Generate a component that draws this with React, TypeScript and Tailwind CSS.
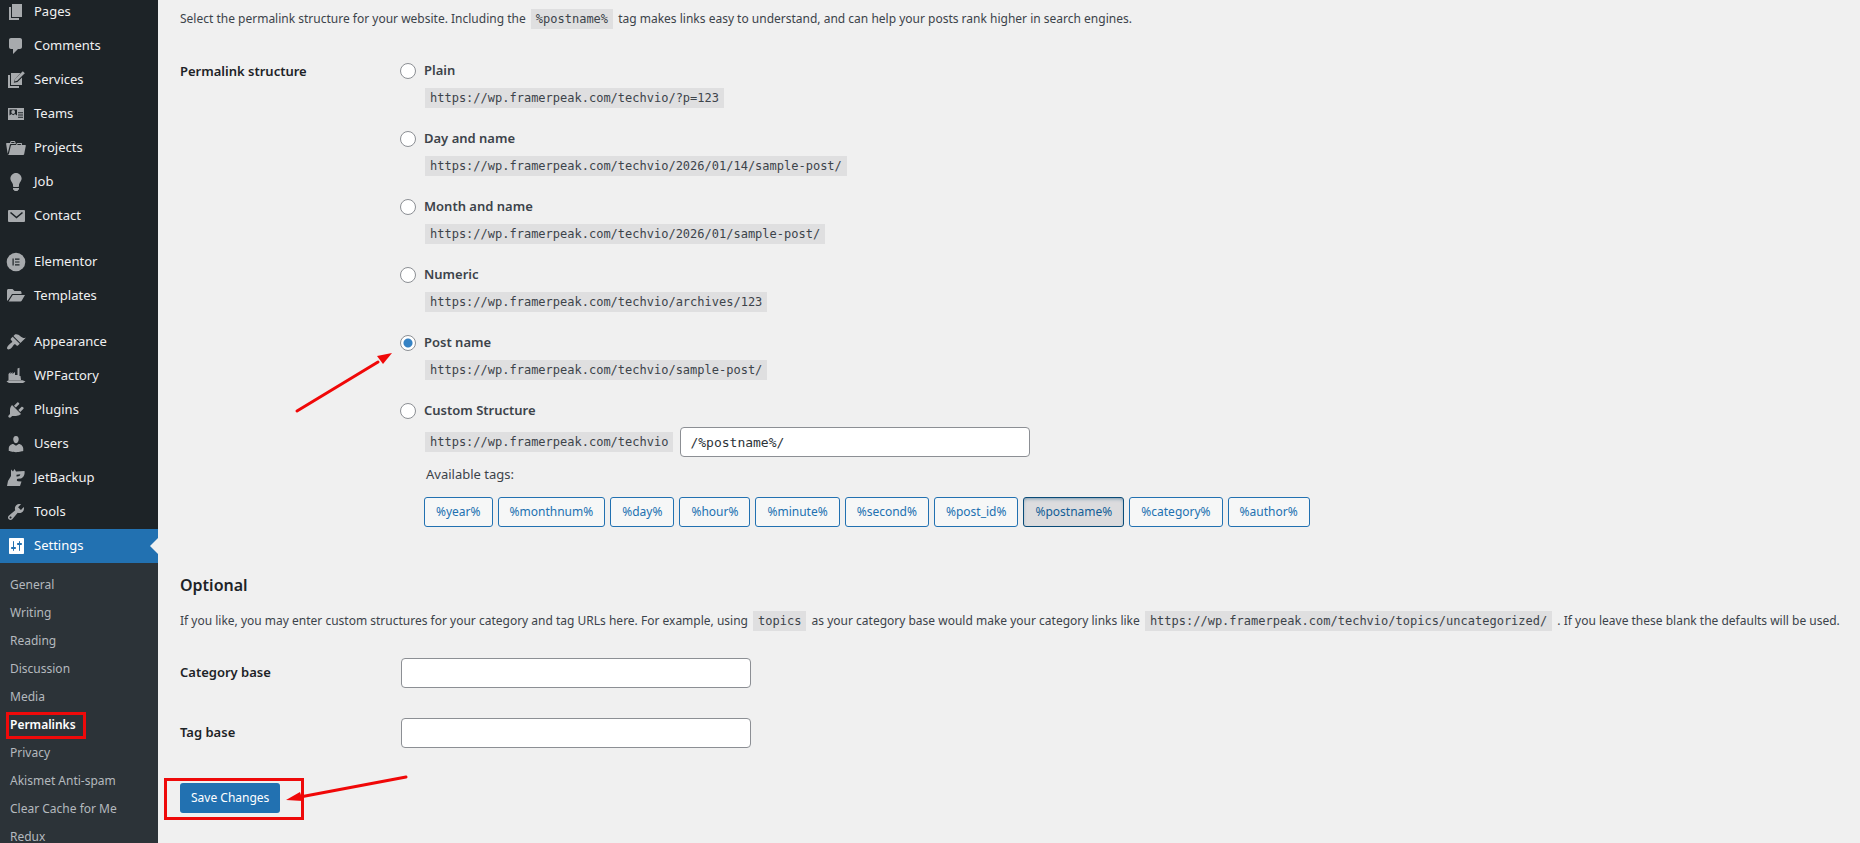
import { clsx } from "clsx";
import type { ReactNode } from "react";

const icons: Record<string, ReactNode> = {
  pages: <path d="M6 15V2h10v13H6zm-1 1h8v2H3V5h2v11z" />,
  comments: (
    <path d="M5 2h9c1.1 0 2 .9 2 2v7c0 1.1-.9 2-2 2h-2l-5 5v-5H5c-1.1 0-2-.9-2-2V4c0-1.1.9-2 2-2z" />
  ),
  services: (
    <>
      <path d="M2 5h2v11h9v2H2z" />
      <path d="M5 3h9.500L9 9l-1.200 3.800L11.500 12 16 7.500V15H5z" />
      <path d="M16.800 1.200l2 2-7.600 7.600-2.600.6.600-2.600z" />
    </>
  ),
  teams: (
    <path
      fillRule="evenodd"
      d="M2 4h16v12H2zM3.500 5.500v8H11v-8zM12 8.200v1h5v-1zM12 10.500v1h5v-1zM12 12.800v1h5v-1zM5.300 8a1.900 2 0 1 1 3.800 0a1.900 2 0 1 1-3.800 0zM3.500 13.500v-2l2-1.500 1.700 1.200L9 10l2 1.500v2z"
    />
  ),
  projects: (
    <path d="M4 5H.78c-.37 0-.74.32-.69.84l1.56 9.99S3.5 8.47 3.86 6.7c.11-.53.61-.7.98-.7H10s-.7-2.08-.77-2.31C9.11 3.25 8.89 3 8.45 3H5.14c-.36 0-.7.23-.8.64C4.25 4.04 4 5 4 5zm4.88 0h-4s.42-1 .87-1h2.13c.48 0 1 1 1 1zM2.67 16.25c-.31.47-.76.75-1.26.75h15.73c.54 0 .92-.31 1.03-.83.44-2.19 1.68-8.44 1.68-8.44.07-.5-.3-.73-.62-.73H16V5.53c0-.16-.26-.53-.66-.53h-3.76c-.52 0-.87.58-.87.58L10 7H5.59c-.32 0-.63.19-.69.5 0 0-1.59 6.7-1.72 7.33-.07.37-.22.99-.51 1.42zM15.38 7H11s.58-1 1.13-1h2.29c.71 0 .96 1 .96 1z" />
  ),
  job: (
    <path d="M10 1c3.11 0 5.63 2.52 5.63 5.62 0 1.84-2.03 4.58-2.03 4.58-.33.44-.6 1.25-.6 1.8v1c0 .55-.45 1-1 1H8c-.55 0-1-.45-1-1v-1c0-.55-.27-1.36-.6-1.8 0 0-2.02-2.74-2.02-4.58C4.38 3.52 6.89 1 10 1zM7 16.87V16h6v.87c0 .62-.13 1.13-.75 1.13H12c0 .62-.4 1-1.02 1h-2c-.61 0-.98-.38-.98-1h-.25c-.62 0-.75-.51-.75-1.13z" />
  ),
  contact: (
    <>
      <rect x="2" y="4" width="17" height="12" rx="1" />
      <path d="M4.500 6.500l6 5 6-5" fill="none" stroke="#1d2327" strokeWidth="1.600" />
    </>
  ),
  elementor: (
    <>
      <circle cx="10" cy="10" r="9.300" />
      <path d="M6.500 6.500h1.200v7H6.500zM9 6.500h4.500v1.200H9zM9 9.400h4.500v1.200H9zM9 12.300h4.500v1.200H9z" fill="#1d2327" />
    </>
  ),
  templates: (
    <path d="M1 4.500C1 3.700 1.600 3 2.500 3h4l2 2h5.500c.8 0 1.500.7 1.500 1.500V8H6L2.500 13.500 1 15zM6.700 9H19l-3.300 5.800c-.3.500-.7.700-1.200.7H2.600z" />
  ),
  appearance: (
    <path d="M14.48 11.06L7.41 3.99l1.5-1.5c.5-.56 2.3-.47 3.51.32 1.21.8 1.43 1.28 2.91 2.1 1.18.64 2.45 1.26 4.45.85zm-.71.71L6.7 4.7 4.93 6.47c-.39.39-.39 1.02 0 1.41l1.06 1.06c.39.39.39 1.03 0 1.42-.6.6-1.43 1.11-2.21 1.69-.35.26-.7.53-1.01.84C1.43 14.23.4 16.08 1.4 17.07c.99 1 2.84-.03 4.18-1.36.31-.31.58-.66.85-1.02.57-.78 1.08-1.61 1.69-2.21.39-.39 1.02-.39 1.41 0l1.06 1.06c.39.39 1.02.39 1.41 0z" />
  ),
  factory: (
    <>
      <path d="M2.500 14V8l2-2v2l2-2v2l2.500-2v3h2.500V2.500l2-.8V10h1l.5 4z" />
      <path d="M.5 15.500L2.500 14.300h14l3 1.200L17 17H3z" />
    </>
  ),
  plugins: (
    <path d="M13.11 4.36L9.87 7.6 8 5.73l3.24-3.24c.35-.34 1.05-.2 1.56.32.52.51.66 1.21.31 1.55zm-8 1.77l.91-1.12 9.01 9.01-1.19.84c-.71.71-2.63 1.16-3.82 1.16H6.14L4.9 17.26c-.59.59-1.54.59-2.12 0-.59-.58-.59-1.53 0-2.12L4 13.9V10c0-1.19.42-3.15 1.11-3.87zm7.26 3.97l3.24-3.24c.34-.35 1.04-.21 1.55.31.52.51.66 1.21.31 1.55l-3.24 3.25z" />
  ),
  users: (
    <path d="M10 9.25c-2.27 0-2.73-3.44-2.73-3.44C7 4.02 7.82 2 9.97 2c2.16 0 2.98 2.02 2.71 3.81 0 0-.41 3.44-2.68 3.44zm0 2.57L12.72 10c2.39 0 4.52 2.33 4.52 4.53v2.49s-3.65 1.13-7.24 1.13c-3.65 0-7.24-1.13-7.24-1.13v-2.49c0-2.25 1.94-4.48 4.47-4.48z" />
  ),
  jetbackup: (
    <path
      fillRule="evenodd"
      d="M5 1.500l2 2L8.500 1l1.500 2.500 8.500-.5c.6 3-.7 6.500-3.500 7.500l-3 .2c-1.500 0-1.600 2.300-.2 2.500l3.700.3L14 18H1l1-5 3-5zM10.500 6.800l3.800-.6c-.2 1.700-1.600 2.400-3.800 2.200z"
    />
  ),
  tools: (
    <path d="M16.68 9.77c-1.34 1.34-3.3 1.67-4.95.99l-5.41 6.52c-.99.99-2.59.99-3.58 0s-.99-2.59 0-3.57l6.52-5.42c-.68-1.65-.35-3.61.99-4.95 1.28-1.28 3.12-1.62 4.72-1.06l-2.89 2.89 2.82 2.82 2.86-2.87c.53 1.58.18 3.39-1.08 4.65zM3.81 16.21c.4.39 1.04.39 1.43 0 .4-.4.4-1.04 0-1.43-.39-.4-1.03-.4-1.43 0-.39.39-.39 1.03 0 1.43z" />
  ),
  settings: (
    <path d="M18 17V3c0-.6-.4-1-1-1H4c-.6 0-1 .4-1 1v14c0 .6.4 1 1 1h13c.6 0 1-.4 1-1zM8 11h1c.55 0 1 .45 1 1s-.45 1-1 1H8v1.500c0 .28-.22.5-.5.5s-.5-.22-.5-.5V13H6c-.55 0-1-.45-1-1s.45-1 1-1h1V5.500c0-.28.22-.5.5-.5s.5.22.5.5V11zm5-2h-1c-.55 0-1-.45-1-1s.45-1 1-1h1V5.500c0-.28.22-.5.5-.5s.5.22.5.5V7h1c.55 0 1 .45 1 1s-.45 1-1 1h-1v5.500c0 .28-.22.5-.5.5s-.5-.22-.5-.5V9z" />
  ),
};

const menuGroups = [
  [
    { icon: "pages", label: "Pages" },
    { icon: "comments", label: "Comments" },
    { icon: "services", label: "Services" },
    { icon: "teams", label: "Teams" },
    { icon: "projects", label: "Projects" },
    { icon: "job", label: "Job" },
    { icon: "contact", label: "Contact" },
  ],
  [
    { icon: "elementor", label: "Elementor" },
    { icon: "templates", label: "Templates" },
  ],
  [
    { icon: "appearance", label: "Appearance" },
    { icon: "factory", label: "WPFactory" },
    { icon: "plugins", label: "Plugins" },
    { icon: "users", label: "Users" },
    { icon: "jetbackup", label: "JetBackup" },
    { icon: "tools", label: "Tools" },
    { icon: "settings", label: "Settings" },
  ],
];

const submenu = [
  "General",
  "Writing",
  "Reading",
  "Discussion",
  "Media",
  "Permalinks",
  "Privacy",
  "Akismet Anti-spam",
  "Clear Cache for Me",
  "Redux",
];

const site = "https://wp.framerpeak.com/techvio";

const structures = [
  { id: "plain", label: "Plain", path: "/?p=123" },
  { id: "day", label: "Day and name", path: "/2026/01/14/sample-post/" },
  { id: "month", label: "Month and name", path: "/2026/01/sample-post/" },
  { id: "numeric", label: "Numeric", path: "/archives/123" },
  { id: "postname", label: "Post name", path: "/sample-post/" },
];

const tags = [
  "year",
  "monthnum",
  "day",
  "hour",
  "minute",
  "second",
  "post_id",
  "postname",
  "category",
  "author",
];

const Code = ({ inline, children }: { inline?: boolean; children: ReactNode }) => (
  <code
    className={clsx(
      "inline-block h-5 px-[5px] text-xs leading-5 bg-[#dfdfe0] font-['DejaVu_Sans_Mono',monospace]",
      inline && "mx-0.5"
    )}
  >
    {children}
  </code>
);

const Radio = ({ id, checked }: { id: string; checked?: boolean }) => (
  <input
    type="radio"
    id={id}
    name="structure"
    defaultChecked={checked}
    className="appearance-none size-4 shrink-0 rounded-full border border-[#8c8f94] bg-white checked:bg-[radial-gradient(circle,#3582c4_0_4px,transparent_5px)]"
  />
);

const inputClass =
  "block h-[30px] w-[350px] rounded border border-[#8c8f94] bg-white px-[9px] text-[13px] text-[#2c3338] font-['DejaVu_Sans_Mono',monospace]";

const Sidebar = () => (
  <nav className="w-[158px] shrink-0 overflow-hidden bg-[#1d2327]">
    <div className="-mt-[5px] flex flex-col gap-3">
      {menuGroups.map((group, i) => (
        <ul key={i}>
          {group.map(({ icon, label }) => {
            const active = icon === "settings";
            return (
              <li key={icon}>
                <a
                  href="#"
                  className={clsx(
                    "relative flex h-[34px] items-center gap-2 pl-1.5 text-[13px]",
                    active ? "bg-[#2271b1] text-white" : "text-[#f0f0f1]"
                  )}
                >
                  <svg
                    viewBox="0 0 20 20"
                    className={clsx(
                      "size-5",
                      active ? "fill-white" : "fill-[#a7aaad]"
                    )}
                  >
                    {icons[icon]}
                  </svg>
                  {label}
                  {active && (
                    <span className="absolute right-0 top-1/2 -translate-y-1/2 border-8 border-transparent border-r-[#f0f0f0]" />
                  )}
                </a>
              </li>
            );
          })}
        </ul>
      ))}
    </div>
    <ul className="h-full bg-[#2c3338] pt-2 text-xs">
      {submenu.map((label) => (
        <li key={label} className="relative">
          <a
            href="#"
            className={clsx(
              "flex h-7 items-center px-2.5",
              label === "Permalinks"
                ? "font-semibold text-white"
                : "text-[#b4b9be]"
            )}
          >
            {label}
          </a>
          {label === "Permalinks" && (
            <span className="pointer-events-none absolute left-1.5 top-px h-[27px] w-20 border-3 border-[#ee0a0a]" />
          )}
        </li>
      ))}
    </ul>
  </nav>
);

const PermalinkStructure = () => (
  <div className="grid grid-cols-[220px_1fr] pt-[31px]">
    <h3 className="text-[13px] font-semibold text-[#1d2327] leading-5">
      Permalink structure
    </h3>
    <div role="radiogroup" aria-label="Permalink structure">
      {structures.map(({ id, label, path }) => (
        <div key={id} className="relative h-[68px]">
          <div className="flex h-5 items-center gap-2">
            <Radio id={id} checked={id === "postname"} />
            <label htmlFor={id} className="text-[13px] font-semibold">
              {label}
            </label>
          </div>
          <div className="flex pl-[25px] pt-[7px]">
            <Code>{site + path}</Code>
          </div>
          {id === "postname" && (
            <svg
              viewBox="0 0 100 64"
              className="pointer-events-none absolute right-full top-5 mr-2 h-16 w-[100px]"
            >
              <path d="M5 58L86 9" stroke="#f00808" strokeWidth="3" strokeLinecap="round" />
              <path d="M100 0L91 11 85 3z" fill="#f00808" />
            </svg>
          )}
        </div>
      ))}
      <div className="flex h-5 items-center gap-2">
        <Radio id="custom" />
        <label htmlFor="custom" className="text-[13px] font-semibold">
          Custom Structure
        </label>
      </div>
      <div className="flex items-center gap-[7px] pl-[25px] pt-1.5">
        <Code>{site}</Code>
        <input
          type="text"
          aria-label="Custom structure"
          defaultValue="/%postname%/"
          className={inputClass}
        />
      </div>
      <p className="pl-[26px] pt-[7px] text-[13px] leading-5">Available tags:</p>
      <div className="flex flex-wrap gap-[5px] pl-6 pt-[13px]">
        {tags.map((tag) => (
          <button
            key={tag}
            type="button"
            className={clsx(
              "h-[30px] rounded-[3px] border px-[11px] text-xs",
              tag === "postname"
                ? "border-[#0a4b78] bg-[#dcdcde] text-[#135e96] shadow-[inset_0_2px_5px_-3px_#0a4b78]"
                : "border-[#2271b1] bg-[#f6f7f7] text-[#2271b1]"
            )}
          >
            %{tag}%
          </button>
        ))}
      </div>
    </div>
  </div>
);

const BaseField = ({ id, label }: { id: string; label: string }) => (
  <div className="grid grid-cols-[221px_1fr] items-center">
    <label
      htmlFor={id}
      className="text-[13px] font-semibold text-[#1d2327]"
    >
      {label}
    </label>
    <input type="text" id={id} className={inputClass} />
  </div>
);

const App = () => {
  return (
    <div className="flex h-screen overflow-hidden bg-[#f0f0f0] font-['Noto_Sans',sans-serif] text-[#3c434a]">
      <Sidebar />
      <main className="min-w-0 flex-1 pl-[22px] pt-2">
        <form>
          <p className="whitespace-nowrap text-xs leading-[22px]">
            Select the permalink structure for your website. Including the{" "}
            <Code inline>%postname%</Code> tag makes links easy to understand,
            and can help your posts rank higher in search engines.
          </p>
          <PermalinkStructure />
          <h2 className="pt-[46px] text-base font-semibold leading-6 text-[#1d2327]">
            Optional
          </h2>
          <p className="whitespace-nowrap pt-[13px] text-xs leading-[22px]">
            If you like, you may enter custom structures for your category and
            tag URLs here. For example, using <Code inline>topics</Code> as your
            category base would make your category links like{" "}
            <Code inline>{site}/topics/uncategorized/</Code> . If you leave
            these blank the defaults will be used.
          </p>
          <div className="flex flex-col gap-[30px] pt-[26px]">
            <BaseField id="category" label="Category base" />
            <BaseField id="tag" label="Tag base" />
          </div>
          <div className="flex pt-[35px]">
            <div className="relative">
              <button
                type="submit"
                className="h-[30px] rounded-[3px] bg-[#2271b1] px-[11px] text-xs text-white"
              >
                Save Changes
              </button>
              <span className="pointer-events-none absolute -left-4 -top-[5px] h-[42px] w-[140px] border-3 border-[#ee0a0a]" />
              <svg
                viewBox="0 0 124 32"
                className="pointer-events-none absolute left-full -top-2.5 ml-1.5 h-8 w-[124px]"
              >
                <path d="M14 24L120 4" stroke="#f00808" strokeWidth="3" strokeLinecap="round" />
                <path d="M0 27L14 19 17 28z" fill="#f00808" />
              </svg>
            </div>
          </div>
        </form>
      </main>
    </div>
  );
};

export default App;
